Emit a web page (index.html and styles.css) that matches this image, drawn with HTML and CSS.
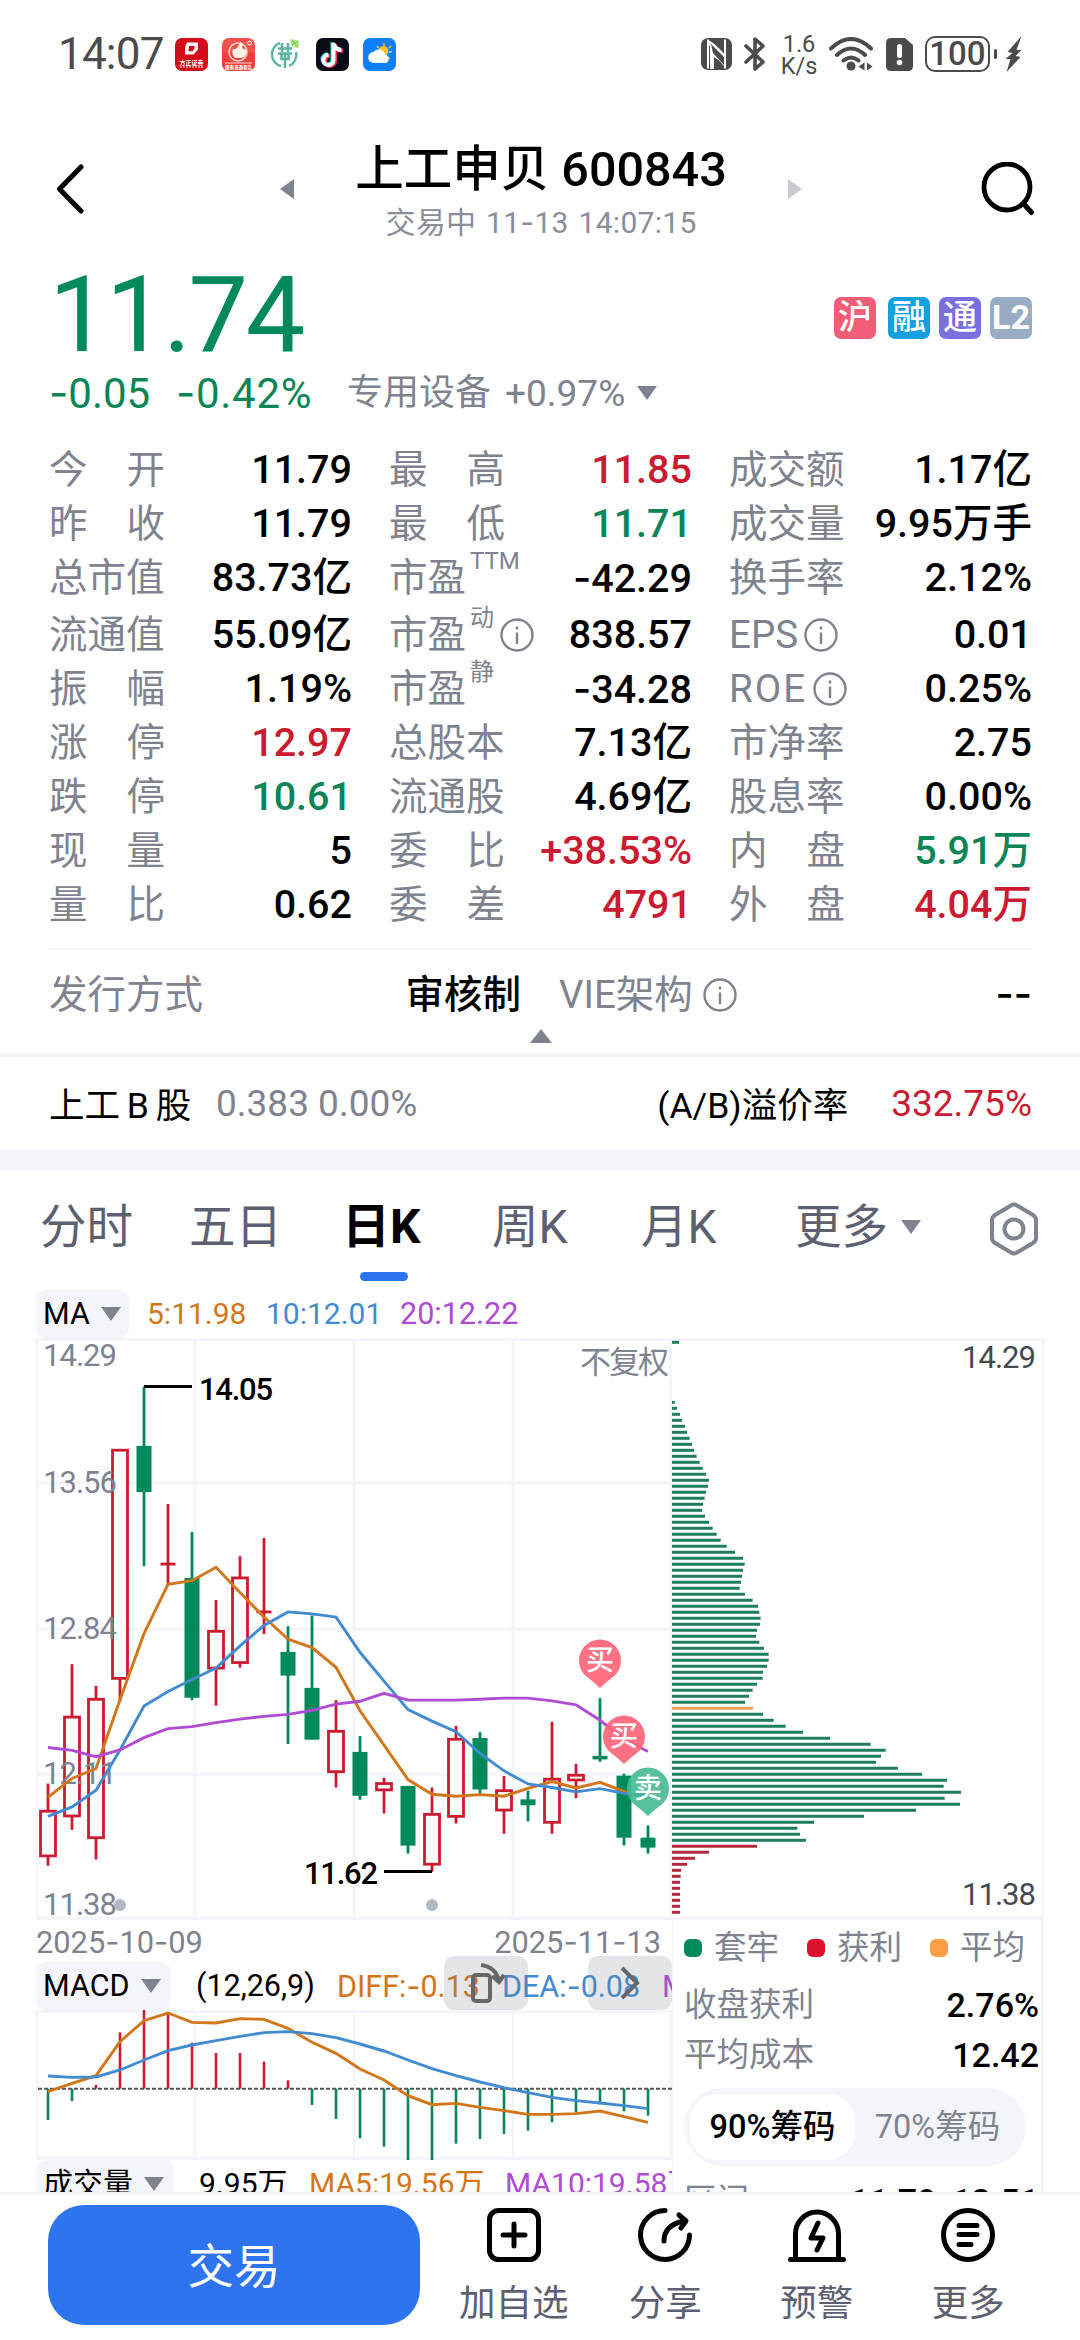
FILE: index.html
```html
<!DOCTYPE html>
<html lang="zh-CN">
<head>
<meta charset="utf-8">
<title>上工申贝 600843</title>
<link rel="stylesheet" href="styles.css">
</head>
<body>
<div class="status">
  <span class="time">14:07</span>
  <div class="apps">
    <svg viewBox="0 0 33 33"><rect width="33" height="33" rx="7" fill="#d40b18"/><path d="M12 4.500h11v7l-4.500 5H10v-7z" fill="#fff"/><path d="M14 8h5.500v3l-2 2.300h-4z" fill="#d40b18"/><text x="16.500" y="26.500" class="micro" font-size="6">方正证券</text><path d="M5 29h23" stroke="#fff" stroke-dasharray="2 1"/></svg>
    <svg viewBox="0 0 33 33"><rect width="33" height="33" rx="7" fill="#f4504b"/><path d="M0 15h33v11a7 7 0 0 1-7 7H7a7 7 0 0 1-7-7z" fill="#f03230" opacity=".6"/><circle cx="16" cy="14" r="9" fill="none" stroke="#ffd9d2" stroke-width="1.600"/><path d="M11 11q5 1 7-7q4 0 2 6l4 2q1 7-5 8h-6q-4-4-2-9z" fill="#fff3e6"/><circle cx="27.500" cy="5" r="2" fill="none" stroke="#fff"/><path d="M3 25h27" stroke="#fff" stroke-width=".8"/><text x="16.500" y="30.500" class="micro" font-size="4.500">国泰海通君弘</text></svg>
    <svg viewBox="0 0 33 33"><g fill="none" stroke="#5bb5a2" stroke-width="2.400"><path d="M11 5A12 12 0 0 0 12 28M20 28A12 12 0 0 0 27 14"/><path d="M13 5v9M19 5v9M9 10.500h14M9 15.500h14M12.500 15v6h7v-6M16 15v15" stroke-width="2.600"/></g><path d="M21 1q6 0 9 3q0 4-1 6q-5 0-7-3z" fill="#b5e78b"/><path d="m23 2 6 7M29 3l-6 4" stroke="#6cc040"/></svg>
    <svg viewBox="0 0 33 33"><rect width="33" height="33" rx="7" fill="#090b18"/><g fill="none" stroke-width="4"><path d="M17.500 5v17a5 5 0 1 1-5-5M17.500 6q2 6 8 6" stroke="#25e5df" transform="translate(-1 -.8)"/><path d="M17.500 5v17a5 5 0 1 1-5-5M17.500 6q2 6 8 6" stroke="#f12a50" transform="translate(1.500 1)"/><path d="M17.500 5v17a5 5 0 1 1-5-5M17.500 6q2 6 8 6" stroke="#fff"/></g></svg>
    <svg viewBox="0 0 33 33"><rect width="33" height="33" rx="7" fill="#0a80ff"/><path d="M21 5v3M14 8l2 2M28 8l-2 2M26 14h3M25 19l2 2" stroke="#ffc12d" stroke-width="1.400"/><circle cx="20.500" cy="13" r="5" fill="#ffc12d"/><path d="M11 25a5.500 5.500 0 0 1-.5-11a6.500 6.500 0 0 1 11.500 2.500a4.500 4.500 0 0 1 1 8.500z" fill="#fff"/></svg>
  </div>
  <div class="signals">
    <svg class="nfc" viewBox="0 0 31 32"><rect width="31" height="32" rx="7" fill="#4b4b4b"/><path d="M7 1.500v29M24 1.500v29" stroke="#fff" stroke-width="2"/><path d="M7 2q7 3 17 15v13q-3-6-11-11v12H9V9" fill="#fff"/><path d="m10 6 13 13v8L12 15z" fill="#4b4b4b"/></svg>
    <svg class="bt" viewBox="0 0 22 34"><path d="m2 9 17 16-8 7V2l8 7L2 25" fill="none" stroke="#4b4b4b" stroke-width="3.600" stroke-linejoin="round" stroke-linecap="round"/></svg>
    <div class="speed"><span>1.6</span><span>K/s</span></div>
    <svg class="wifi" viewBox="0 0 44 34"><g fill="none" stroke="#4b4b4b" stroke-width="4" stroke-linecap="round"><path d="M2 11.500q20-19 40 0M8 18q14-13 28 0M14.500 23.500q7.500-6 15 0"/></g><circle cx="22" cy="29" r="4.500" fill="#4b4b4b"/><path d="m29.500 29.500 6-4v8zM38 25.500v8l5.500-4z" fill="#4b4b4b"/></svg>
    <svg class="sim" viewBox="0 0 27 33"><path d="M5 0h14l8 7v21q0 5-5 5H5q-5 0-5-5V5q0-5 5-5z" fill="#4b4b4b"/><path d="M13.500 8.500v9" stroke="#fff" stroke-width="5" stroke-linecap="round"/><circle cx="13.500" cy="24.500" r="2.800" fill="#fff"/></svg>
    <div class="battery">100</div><i class="nub"></i>
    <svg class="bolt" viewBox="0 0 16 36"><path d="M16 0 2 16l5 1-7 6h5L1 36l14-15-5-1 6-6h-5z" fill="#4b4b4b"/></svg>
  </div>
</div>

<header class="header">
  <svg class="back" viewBox="0 0 28 50"><path d="M25 3 3.500 25 25 47" fill="none" stroke="#000" stroke-width="5" stroke-linecap="round" stroke-linejoin="round"/></svg>
  <svg class="prev" viewBox="0 0 14 20"><path d="M14 0v20L0 10z" fill="#7f8390"/></svg>
  <div class="heading">
    <h1>上工申贝 600843</h1>
    <p>交易中 11<i>-</i>13 14:07:15</p>
  </div>
  <svg class="next" viewBox="0 0 14 20"><path d="M0 0v20l14-10z" fill="#c9cad0"/></svg>
  <svg class="search" viewBox="0 0 54 54"><circle cx="26" cy="25" r="23" fill="none" stroke="#000" stroke-width="4.800"/><path d="m42.500 41.500 8 9" stroke="#000" stroke-width="5" stroke-linecap="round"/></svg>
</header>

<section class="quote">
  <div class="price-row">
    <strong class="price">11.74</strong>
    <div class="tags"><b class="hu">沪</b><b class="rong">融</b><b class="tong">通</b><b class="l2">L2</b></div>
  </div>
  <div class="change">
    <span class="diff"><i>-</i>0.05</span><span class="pct"><i>-</i>0.42%</span>
    <span class="sector">专用设备</span><span class="sector-pct">+0.97%</span>
    <svg class="tri" viewBox="0 0 20 14"><path d="M0 0h20L10 14z"/></svg>
  </div>

  <div class="stats">
    <div><span class="two">今 开</span><b>11.79</b></div><div><span class="two">最 高</span><b class="up">11.85</b></div><div><span>成交额</span><b>1.17亿</b></div>
    <div><span class="two">昨 收</span><b>11.79</b></div><div><span class="two">最 低</span><b class="down">11.71</b></div><div><span>成交量</span><b>9.95万手</b></div>
    <div><span>总市值</span><b>83.73亿</b></div><div><span>市盈</span><small>TTM</small><b><i>-</i>42.29</b></div><div><span>换手率</span><b>2.12%</b></div>
    <div><span>流通值</span><b>55.09亿</b></div><div><span>市盈</span><small>动</small><svg class="info after-sup" viewBox="0 0 34 34"><circle cx="17" cy="17" r="15.500"/><path d="M17 14.500V26M17 8.500v3"/></svg><b>838.57</b></div><div><span>EPS</span><svg class="info" viewBox="0 0 34 34"><circle cx="17" cy="17" r="15.500"/><path d="M17 14.500V26M17 8.500v3"/></svg><b>0.01</b></div>
    <div><span class="two">振 幅</span><b>1.19%</b></div><div><span>市盈</span><small>静</small><b><i>-</i>34.28</b></div><div><span class="roe">ROE</span><svg class="info" viewBox="0 0 34 34"><circle cx="17" cy="17" r="15.500"/><path d="M17 14.500V26M17 8.500v3"/></svg><b>0.25%</b></div>
    <div><span class="two">涨 停</span><b class="up">12.97</b></div><div><span>总股本</span><b>7.13亿</b></div><div><span>市净率</span><b>2.75</b></div>
    <div><span class="two">跌 停</span><b class="down">10.61</b></div><div><span>流通股</span><b>4.69亿</b></div><div><span>股息率</span><b>0.00%</b></div>
    <div><span class="two">现 量</span><b>5</b></div><div><span class="two">委 比</span><b class="up">+38.53%</b></div><div><span class="two">内 盘</span><b class="down">5.91万</b></div>
    <div><span class="two">量 比</span><b>0.62</b></div><div><span class="two">委 差</span><b class="up">4791</b></div><div><span class="two">外 盘</span><b class="up">4.04万</b></div>
  </div>

  <div class="issue">
    <div class="method"><span>发行方式</span><b>审核制</b></div>
    <div class="vie"><span>VIE架构</span><svg class="info" viewBox="0 0 34 34"><circle cx="17" cy="17" r="15.500"/><path d="M17 14.500V26M17 8.500v3"/></svg><b><i>-</i><i>-</i></b></div>
  </div>
  <svg class="collapse" viewBox="0 0 22 14"><path d="M0 14h22L11 0z" fill="#7f8390"/></svg>
</section>

<section class="bshare">
  <span class="bname">上工 B 股</span><span class="bquote">0.383 0.00%</span>
  <span class="premium">(A/B)溢价率</span><span class="premium-val">332.75%</span>
</section>

<nav class="tabs">
  <span>分时</span><span>五日</span><span class="active">日K</span><span>周K</span><span>月K</span><span class="more">更多<svg class="tri" viewBox="0 0 20 14"><path d="M0 0h20L10 14z"/></svg></span>
  <svg class="gear" viewBox="0 0 50 54"><path d="M22 3.500q3-2 6 0l16 9.500q3 2 3 5v18q0 3-3 5l-16 9.500q-3 2-6 0L6 41q-3-2-3-5V18q0-3 3-5z"/><circle cx="25" cy="27" r="9.500"/></svg>
</nav>

<div class="legend">
  <span class="pill">MA<svg class="tri" viewBox="0 0 20 14"><path d="M0 0h20L10 14z"/></svg></span>
  <span class="orange">5:11.98</span><span class="blue">10:12.01</span><span class="purple">20:12.22</span>
</div>
<svg id="kline" class="kline" viewBox="36 1338 1008 582"></svg>

<main class="lower">
  <div class="left">
    <div class="dates"><span>2025<i>-</i>10<i>-</i>09</span><span>2025<i>-</i>11<i>-</i>13</span></div>
    <div class="legend macd-legend">
      <span class="pill">MACD<svg class="tri" viewBox="0 0 20 14"><path d="M0 0h20L10 14z"/></svg></span>
      <span class="params">(12,26,9)</span><span class="orange">DIFF:<i>-</i>0.13</span><span class="blue">DEA:<i>-</i>0.08</span><span class="purple">MACD:<i>-</i>0.10</span>
      <div class="float rotate"><svg viewBox="0 0 84 54"><g fill="none" stroke="#66676b" stroke-width="4"><rect x="29" y="19" width="17" height="26" rx="3"/><path d="M37 9q15 2 18 16M48 20l7 6 5-7"/></g></svg></div>
      <div class="float forward"><svg viewBox="0 0 84 54"><path d="m34 12 15 15-15 15" fill="none" stroke="#66676b" stroke-width="4"/></svg></div>
    </div>
    <svg id="macd" class="macd" viewBox="36 2010 636 150"></svg>
    <div class="legend vol-legend">
      <span class="pill">成交量<svg class="tri" viewBox="0 0 20 14"><path d="M0 0h20L10 14z"/></svg></span>
      <span class="vol">9.95万</span><span class="orange">MA5:19.56万</span><span class="purple">MA10:19.58万</span>
    </div>
  </div>
  <aside class="chips">
    <div class="keys"><span class="trapped">套牢</span><span class="gain">获利</span><span class="avg">平均</span></div>
    <div class="line"><span>收盘获利</span><b>2.76%</b></div>
    <div class="line"><span>平均成本</span><b>12.42</b></div>
    <div class="segment"><b>90%筹码</b><span>70%筹码</span></div>
    <div class="line range"><span>区间</span><b>11.79<i>-</i>13.51</b></div>
  </aside>
</main>

<footer class="actions">
  <button class="trade">交易</button>
  <div class="action"><svg viewBox="0 0 54 54"><rect x="2.500" y="2.500" width="49" height="49" rx="9"/><path d="M27 16v22M16 27h22"/></svg>加自选</div>
  <div class="action"><svg viewBox="0 0 54 54"><path d="M27 2.500A24.500 24.500 0 1 0 51.500 27"/><path d="M26 33q0-16 20-20M41 7l7 6-5 7" stroke-linejoin="round"/></svg>分享</div>
  <div class="action"><svg class="wide" viewBox="0 0 58 54"><path d="M7.500 50V26a21.500 22 0 0 1 43 0v24M2.500 51.500h53"/><path d="m30 15-7 15h12l-6 12" stroke-linejoin="round"/></svg>预警</div>
  <div class="action"><svg viewBox="0 0 54 54"><circle cx="27" cy="27" r="24.500"/><path d="M18 17.500h18M18 26.500h18M18 36.500h12"/></svg>更多</div>
</footer>
<script src="charts.js"></script>
</body>
</html>
```
FILE: styles.css
```css
* { box-sizing: border-box; }
body {
  margin: 0;
  width: 1080px;
  height: 2340px;
  overflow: hidden;
  background: #fff;
  color: #000;
  font-family: Roboto, "Noto Sans CJK SC", sans-serif;
  white-space: nowrap;
}
svg { display: block; flex: none; }
i { font-style: normal; font-family: Inter, sans-serif; }
.up { color: #cb1b31; }
.down { color: #0b8457; }
.orange { color: #d3761a; }
.blue { color: #428bd0; }
.purple { color: #b04bd4; }
.tri { width: 20px; height: 14px; fill: #7f8390; }

.status { display: flex; align-items: center; height: 108px; padding: 0 58px 0 58px; color: #4b4b4b; }
.time { width: 117px; font-size: 44px; letter-spacing: -0.800px; }
.apps { display: flex; gap: 14px; }
.apps svg { width: 33px; height: 33px; }
.micro { fill: #fff; text-anchor: middle; font-weight: 700; }
.signals { display: flex; align-items: center; margin-left: auto; }
.nfc { width: 31px; height: 32px; }
.bt { width: 22px; height: 34px; margin-left: 12px; }
.speed { display: flex; flex-direction: column; align-items: center; width: 34px; margin: 1px 13px 0 16px; font-size: 23.500px; line-height: 22px; }
.wifi { width: 44px; height: 34px; }
.sim { width: 27px; height: 33px; margin-left: 13px; }
.battery { width: 65px; height: 36px; margin-left: 12px; border: 2.500px solid #4b4b4b; border-radius: 10px; font-size: 33px; line-height: 32px; text-align: center; font-weight: 500; }
.nub { width: 3px; height: 10px; margin-left: 4px; border-radius: 2px; background: #4b4b4b; }
.bolt { width: 17px; height: 36px; margin-left: 8px; }

.header { display: flex; align-items: center; height: 162px; padding: 0 45px 0 56px; }
.back { width: 28px; height: 50px; }
.prev { width: 14px; height: 20px; margin-left: 196px; }
.heading { width: 494px; padding-top: 11px; text-align: center; }
.heading h1 { margin: 0; font-size: 48.500px; font-weight: 500; line-height: 56px; }
.heading p { margin: 0; font-size: 30px; line-height: 48px; color: #8a8e9a; letter-spacing: .3px; word-spacing: 2px; }
.next { width: 14px; height: 20px; }
.search { width: 54px; height: 54px; margin-left: auto; }

.quote { padding: 0 48px 11px 49px; border-bottom: 3px solid #f3f4f8; }
.price-row { display: flex; align-items: center; justify-content: space-between; height: 90px; }
.price { font-size: 106px; font-weight: 400; line-height: 90px; color: #008a5b; letter-spacing: -2.500px; }
.tags { display: flex; margin-top: 6px; }
.tags b { width: 42px; height: 42px; margin-left: 9px; border-radius: 7px; color: #fff; font-size: 34px; font-weight: 500; line-height: 41px; text-align: center; }
.tags .hu { background: #ef5d76; }
.tags .rong { margin-left: 12px; background: #149fdf; }
.tags .tong { background: #7a6fdf; }
.tags .l2 { background: #9aabc4; font-weight: 700; }
.change { display: flex; align-items: center; height: 65px; font-size: 42px; line-height: 65px; color: #0b8457; }
.diff { width: 127px; }
.pct { width: 171px; letter-spacing: .7px; }
.sector { width: 158px; padding-top: 2px; font-size: 36px; color: #7f8390; }
.sector-pct { width: 132px; padding-top: 2px; font-size: 37px; color: #7f8390; }

.stats { display: grid; grid-template-columns: repeat(3, 303px); column-gap: 37px; grid-template-rows: repeat(3, 54px) 57px repeat(5, 54px); margin-top: 18px; padding-bottom: 16px; border-bottom: 2px solid #f4f5f9; }
.stats > div { display: flex; align-items: center; font-size: 38.500px; line-height: 54px; color: #7f8390; }
.stats > div:nth-child(n+10):nth-child(-n+12) { padding-top: 3px; }
.stats .two { width: 116px; text-align-last: justify; }
.stats b, .issue b { margin-left: auto; color: #000; font-size: 39.500px; font-weight: 500; }
.issue .method b { font-size: 38.500px; }
.stats b.up { color: #cb1b31; }
.stats b.down { color: #0b8457; }
.stats small { align-self: flex-start; margin: -12px 0 0 4px; font-size: 24px; line-height: 44px; }
.roe { letter-spacing: 2px; }
.info { width: 34px; height: 34px; margin-left: 6px; fill: none; stroke: #7f8390; stroke-width: 2.400; }
.issue { display: grid; grid-template-columns: 472px 473px; column-gap: 38px; height: 79px; padding-top: 10px; font-size: 38.500px; line-height: 69px; color: #7f8390; }
.issue > div { display: flex; align-items: center; }
.vie .info { margin-left: 10px; }
.collapse { width: 22px; height: 14px; margin: 0 auto; }

.bshare { display: flex; align-items: center; height: 113px; padding: 0 48px 0 49px; border-bottom: 20px solid #f4f5fa; font-size: 35.500px; }
.bname { width: 143px; padding-bottom: 3px; word-spacing: -2px; }
.bquote { margin-left: 24px; font-size: 37px; color: #7f8390; }
.premium { margin-left: auto; padding-bottom: 3px; }
.premium-val { margin-left: 43px; font-size: 37px; color: #cb1b31; }

.tabs { display: flex; align-items: center; height: 114px; padding: 0 41px 0 40px; font-size: 46.500px; line-height: 116px; color: #5c6070; }
.tabs > span { width: 149px; }
.tabs span.active { position: relative; width: 150px; margin-left: 4px; color: #000; font-size: 48px; font-weight: 700; }
.tabs .active::after { content: ""; position: absolute; left: 18px; top: 103px; width: 48px; height: 9px; border-radius: 5px; background: #2d74ee; }
.tabs span.more { display: flex; align-items: center; gap: 13px; margin-left: 5px; }
.gear { width: 50px; height: 54px; margin: 4px 0 0 auto; fill: none; stroke: #7f8390; stroke-width: 4; }

.legend { display: flex; align-items: center; height: 48px; font-size: 30.500px; line-height: 50px; }
.legend > span { flex: none; }
.tabs + .legend { margin: 6px 0 0 36px; }
.pill { display: flex; align-items: center; height: 48px; padding: 0 9px 0 7px; gap: 12px; border-radius: 10px; background: #f4f5fa; }
.tabs + .legend > .pill { width: 93px; gap: 11px; }
.tabs + .legend > .orange { width: 119px; margin-left: 18px; font-size: 30px; }
.tabs + .legend > .blue { width: 134px; font-size: 30px; }
.kline { width: 1008px; height: 582px; margin-left: 36px; }
.kline text { font-size: 31px; }

.lower { display: flex; height: 272px; padding: 0 36px; overflow: hidden; }
.left { width: 637px; overflow: hidden; border-right: 1px solid #f3f4f8; }
.dates { display: flex; justify-content: space-between; height: 42px; padding-right: 11px; font-size: 30.800px; line-height: 43px; color: #7f8390; }
.macd-legend { position: relative; }
.macd-legend .pill { width: 135px; gap: 11px; }
.params { width: 141px; margin-left: 25px; }
.macd-legend .orange { width: 165px; }
.macd-legend .blue { width: 160px; }
.float { position: absolute; top: -6px; width: 84px; height: 54px; border-radius: 10px; background: rgba(120, 124, 140, .2); }
.float svg { width: 84px; height: 54px; }
.rotate { left: 408px; }
.forward { left: 552px; }
.macd { width: 636px; height: 150px; }
.vol-legend { font-size: 30px; }
.vol-legend .pill { width: 138px; gap: 11px; }
.vol { width: 110px; margin-left: 25px; }
.vol-legend .orange { width: 196px; }

.chips { width: 371px; padding: 7px 2px 0 11px; border-right: 3px solid #f3f4f8; font-size: 32.500px; color: #7f8390; }
.chips b { color: #000; font-weight: 500; }
.keys { display: flex; height: 42px; line-height: 42px; }
.keys span { display: flex; flex: none; align-items: center; width: 123px; }
.keys span::before { content: ""; width: 18px; height: 18px; margin-right: 12px; border-radius: 6px; }
.keys .trapped::before { background: #008a5b; }
.keys .gain::before { background: #df102d; }
.keys .avg::before { background: #ff9f45; }
.line { display: flex; justify-content: space-between; height: 50px; line-height: 50px; }
.line b { font-size: 34px; }
.keys + .line { margin-top: 11px; }
.segment { display: flex; width: 342px; height: 78px; margin: 8px 0 0 0; padding: 6px; border-radius: 39px; background: #f4f5fa; line-height: 67px; }
.segment b { width: 165px; border-radius: 27px; background: #fff; text-align: center; }
.segment span { width: 165px; text-align: center; }
.range { margin-top: 10px; }

.actions { display: flex; height: 148px; padding: 11px 36px 0 48px; border-top: 2px solid #f3f4f8; }
.trade { width: 372px; height: 120px; margin-right: 18px; padding: 0 0 6px; border: 0; border-radius: 36px; background: #2d74ee; color: #fff; font-family: inherit; font-size: 46.500px; }
.action { display: flex; flex-direction: column; align-items: center; width: 151.500px; padding-top: 3px; font-size: 36.500px; line-height: 54px; color: #5c6070; }
.action svg { width: 54px; height: 54px; margin-bottom: 15px; fill: none; stroke: #000; stroke-width: 5; stroke-linecap: round; }
.action svg.wide { width: 58px; }
```
FILE: charts.js
```js
const RED = '#cb1b31', GREEN = '#008a5b', GRID = '#f4f5fa';
const GREY = '#7f8390';
const MAS = ['#d3761a', '#428bd0', '#b04bd4'];
const x = i => 48 + 24 * i;
const ky = v => 1330 + v / 2.529;
const my = v => 1920 + v / 3;
const line = (x1, y1, x2, y2, c, w) => `<line x1="${x1}" y1="${y1}" x2="${x2}" y2="${y2}" stroke="${c}" stroke-width="${w}"/>`;
const poly = (vals, f, c) => `<polyline fill="none" stroke="${c}" stroke-width="2.9" points="${vals.map((v, i) => x(i) + ',' + f(v)).join(' ')}"/>`;
const text = (s, tx, ty, c, len, extra = '') => `<text x="${tx}" y="${ty}" fill="${c}" textLength="${len}" ${extra}>${s}</text>`;

// [direction, high, body top, body bottom, low]
const candles = [
  [1,1147,1217,1330,1355],[1,845,979,1229,1264],[1,900,934,1284,1339],[1,304,304,881,940],
  [0,143,293,410,597],[1,440,592,592,645],[0,511,627,930,936],[1,683,762,855,950],
  [1,572,627,841,854],[1,526,713,713,769],[0,749,814,874,1047],[0,722,905,1036,1036],
  [1,936,1015,1117,1157],[0,1027,1067,1178,1188],[1,1132,1147,1163,1223],[0,1153,1153,1304,1324],
  [1,1157,1225,1351,1370],[1,1001,1035,1230,1248],[0,1017,1032,1162,1172],[1,1128,1165,1214,1274],
  [0,1165,1187,1202,1243],[1,991,1136,1245,1274],[1,1097,1126,1138,1184],[0,931,1077,1086,1092],
  [0,1122,1127,1284,1304],[0,1253,1284,1309,1324]
];
const ma = [
  [1182,1134,1109,935,768,643,634,600,664,726,782,803,853,963,1050,1137,1174,1179,1175,1179,1159,1142,1158,1144,1167,1187],
  [1230,1206,1164,1062,951,914,884,855,799,747,713,718,726,815,888,960,989,1016,1071,1115,1148,1157,1168,1160,1172,1178],
  [1056,1063,1079,1062,1031,1008,1003,993,984,977,972,962,946,939,919,936,936,936,934,931,931,938,948,987,1035,1066]
];
// chip distribution, one bar per price level starting at level 10
const chips = [44,51,60,66,75,81,89,96,102,110,119,128,138,147,144,138,134,129,126,135,147,158,170,182,200,225,249,254,249,246,243,239,255,278,294,298,302,300,291,288,298,312,326,326,321,309,308,291,278,267,255,279,309,341,377,429,510,632,677,663,648,714,786,861,851,903,854,900,768,612,462,412,420,438,291,147,105,81,63,62,60,60,60,60,60,60];

let k = '';
k += line(36, 1339.5, 1044, 1339.5, GRID, 3) + line(36, 1918.5, 1044, 1918.5, GRID, 3);
k += line(37.5, 1338, 37.5, 1920, GRID, 3) + line(1042.5, 1338, 1042.5, 1920, GRID, 3);
k += line(670.5, 1338, 670.5, 1920, GRID, 3);
[195, 354, 513].forEach(g => k += line(g, 1338, g, 1920, GRID, 3));
[1483, 1629, 1774.5].forEach(g => k += line(36, g, 670, g, GRID, 3));

candles.forEach(([up, hi, top, bot, lo], i) => {
  const c = up ? RED : GREEN;
  if (up && top !== bot) {
    k += line(x(i), ky(hi), x(i), ky(top), c, 2.8) + line(x(i), ky(bot), x(i), ky(lo), c, 2.8);
    k += `<rect x="${x(i) - 7.5}" y="${ky(top)}" width="15" height="${ky(bot) - ky(top)}" fill="#fff" stroke="${c}" stroke-width="2.8"/>`;
  } else {
    k += line(x(i), ky(hi), x(i), ky(lo), c, 2.8);
    const h = Math.max(ky(bot) - ky(top), 2.8);
    k += `<rect x="${x(i) - 7.5}" y="${ky(top) - (top === bot ? 1.4 : 0)}" width="15" height="${h}" fill="${c}"/>`;
  }
});
[['14.29',1366],['13.56',1493],['12.84',1639],['12.11',1784],['11.38',1915]].forEach(([s, y]) => k += text(s, 43, y, GREY, 74));
ma.forEach((m, i) => k += poly(m, ky, MAS[i]));

k += line(144, 1386.5, 192, 1386.5, '#000', 3) + text('14.05', 199, 1400, '#000', 74, 'font-weight="500"');
k += line(384, 1871.5, 432, 1871.5, '#000', 3) + text('11.62', 304, 1884, '#000', 74, 'font-weight="500"');
k += text('不复权', 580, 1373, GREY, 89);
k += text('14.29', 962, 1368, '#444a52', 74) + text('11.38', 962, 1905, '#444a52', 74);
[120, 432].forEach(cx => k += `<circle cx="${cx}" cy="1905" r="6" fill="#b2b8c4"/>`);

[[600,1637,'买','#ff6276'],[624,1713,'买','#ff6276'],[648,1765,'卖','#45ba93']].forEach(([cx, t, s, c]) => {
  k += `<path d="M${cx} ${t + 51}q-6-6-13-11a21 21 0 1 1 26 0q-7 5-13 11z" fill="${c}" fill-opacity=".9"/>`;
  k += `<text x="${cx}" y="${t + 33}" fill="#fff" text-anchor="middle" style="font-size:28px" font-weight="500">${s}</text>`;
});

const bar = (lv, w, c) => line(672, 1342.3 + 6 * lv, 672 + w, 1342.3 + 6 * lv, c, 3);
k += bar(0, 7, '#1d7d5c');
chips.forEach((e, i) => k += bar(i + 10, (e - 36) / 3, i === 51 ? '#eda35c' : i >= 74 ? '#b32a3c' : '#1d7d5c'));
document.getElementById('kline').innerHTML = k;

const hist = [600,543,495,337,270,279,368,399,399,425,481,555,597,655,680,720,720,671,657,642,632,607,577,553,574,587];
const diff = [515,490,467,365,302,279,307,309,296,298,325,367,400,447,480,527,554,550,562,572,583,583,581,573,590,607];
const dea = [468,472,471,450,420,392,375,362,349,338,335,341,353,372,393,420,446,467,486,503,518,532,542,549,557,566];
let m = line(36, 2011.5, 672, 2011.5, GRID, 3) + line(36, 2158.5, 672, 2158.5, GRID, 3) + line(37.5, 2010, 37.5, 2160, GRID, 3) + line(670.5, 2010, 670.5, 2160, GRID, 3);
[195, 354, 513].forEach(g => m += line(g, 2010, g, 2160, GRID, 2.5));
hist.forEach((v, i) => m += line(x(i), 2088.7, x(i), my(v), v < 506 ? RED : '#0b8457', 2.6));
m += '<line x1="38" y1="2088.7" x2="672" y2="2088.7" stroke="#555" stroke-width="2" stroke-dasharray="4 2"/>';
m += poly(diff, my, MAS[0]) + poly(dea, my, MAS[1]);
document.getElementById('macd').innerHTML = m;
```
